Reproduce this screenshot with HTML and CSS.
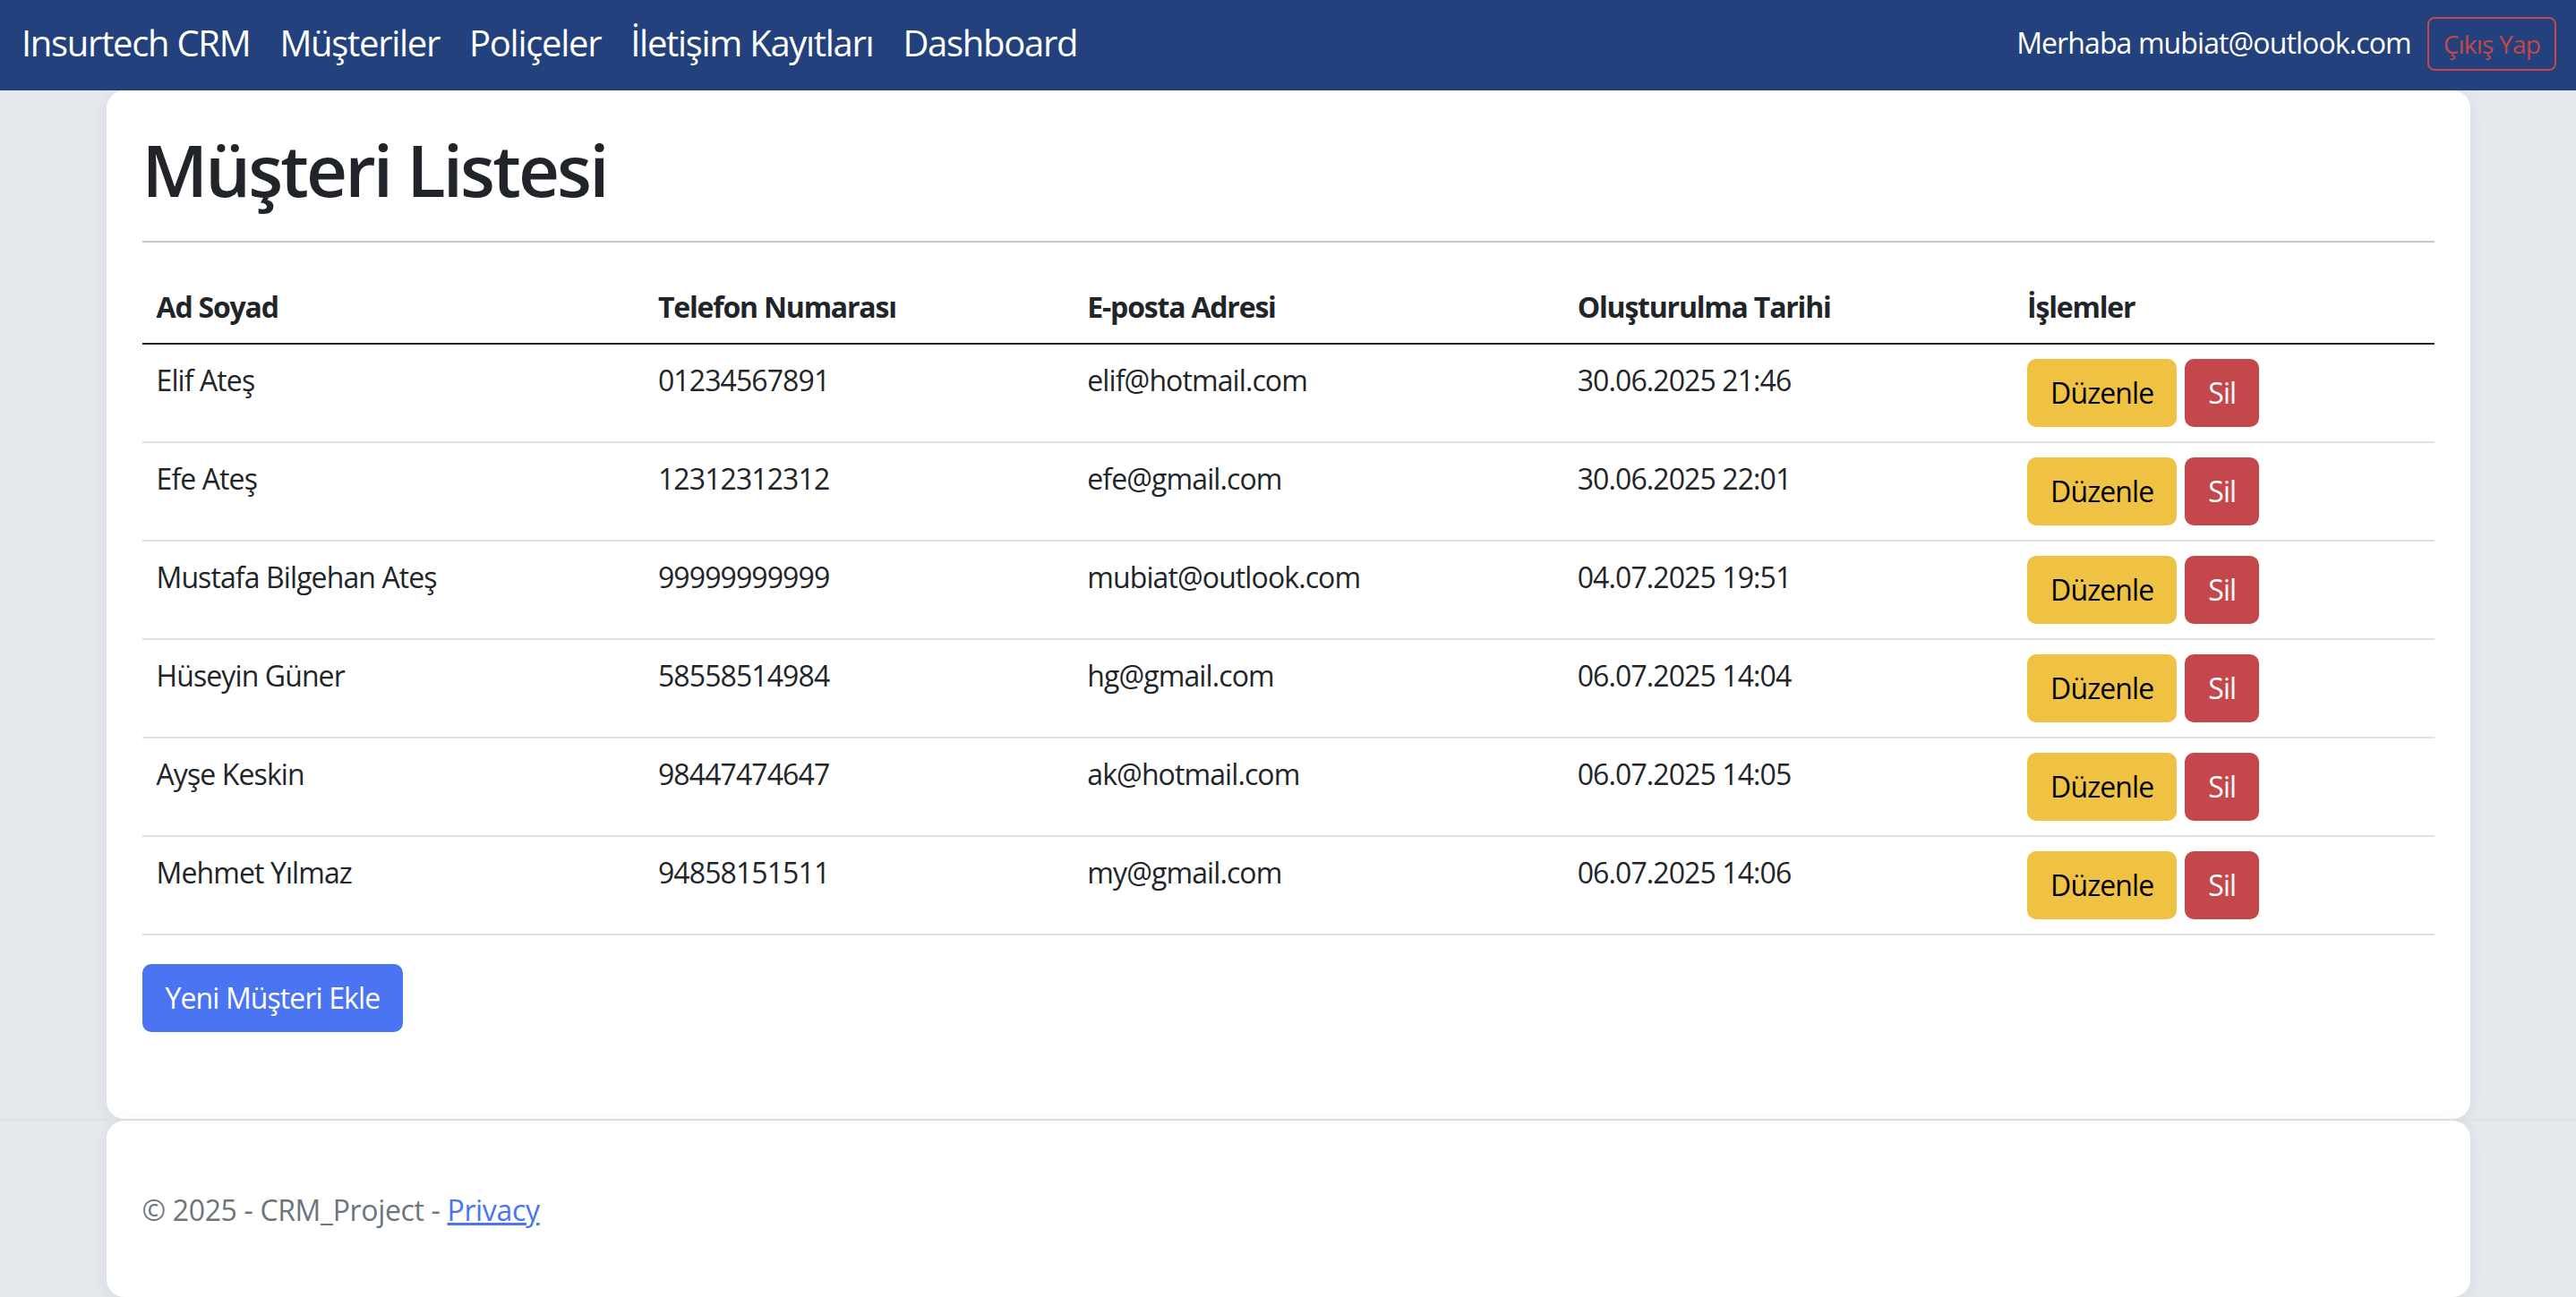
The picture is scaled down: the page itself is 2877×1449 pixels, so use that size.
FILE: index.html
```html
<!DOCTYPE html>
<html lang="tr">
<head>
<meta charset="utf-8">
<title>Müşteri Listesi - Insurtech CRM</title>
<link rel="stylesheet" href="styles.css">
</head>
<body>
<header class="navbar">
  <nav class="nav-left">
    <a class="brand" href="#">Insurtech CRM</a>
    <a class="nav-link" href="#">Müşteriler</a>
    <a class="nav-link" href="#">Poliçeler</a>
    <a class="nav-link" href="#">İletişim Kayıtları</a>
    <a class="nav-link" href="#">Dashboard</a>
  </nav>
  <div class="nav-right">
    <span class="greeting">Merhaba mubiat@outlook.com</span>
    <button class="btn-logout" type="button">Çıkış Yap</button>
  </div>
</header>

<main class="container card main-card">
  <h1 class="page-title">Müşteri Listesi</h1>
  <hr class="divider">
  <table class="table">
    <thead>
      <tr>
        <th class="col-name">Ad Soyad</th>
        <th class="col-phone">Telefon Numarası</th>
        <th class="col-mail">E-posta Adresi</th>
        <th class="col-date">Oluşturulma Tarihi</th>
        <th class="col-actions">İşlemler</th>
      </tr>
    </thead>
    <tbody>
      <tr>
        <td>Elif Ateş</td><td>01234567891</td><td>elif@hotmail.com</td><td>30.06.2025 21:46</td>
        <td><div class="actions"><a class="btn btn-warning" href="#">Düzenle</a><a class="btn btn-danger" href="#">Sil</a></div></td>
      </tr>
      <tr>
        <td>Efe Ateş</td><td>12312312312</td><td>efe@gmail.com</td><td>30.06.2025 22:01</td>
        <td><div class="actions"><a class="btn btn-warning" href="#">Düzenle</a><a class="btn btn-danger" href="#">Sil</a></div></td>
      </tr>
      <tr>
        <td>Mustafa Bilgehan Ateş</td><td>99999999999</td><td>mubiat@outlook.com</td><td>04.07.2025 19:51</td>
        <td><div class="actions"><a class="btn btn-warning" href="#">Düzenle</a><a class="btn btn-danger" href="#">Sil</a></div></td>
      </tr>
      <tr>
        <td>Hüseyin Güner</td><td>58558514984</td><td>hg@gmail.com</td><td>06.07.2025 14:04</td>
        <td><div class="actions"><a class="btn btn-warning" href="#">Düzenle</a><a class="btn btn-danger" href="#">Sil</a></div></td>
      </tr>
      <tr>
        <td>Ayşe Keskin</td><td>98447474647</td><td>ak@hotmail.com</td><td>06.07.2025 14:05</td>
        <td><div class="actions"><a class="btn btn-warning" href="#">Düzenle</a><a class="btn btn-danger" href="#">Sil</a></div></td>
      </tr>
      <tr>
        <td>Mehmet Yılmaz</td><td>94858151511</td><td>my@gmail.com</td><td>06.07.2025 14:06</td>
        <td><div class="actions"><a class="btn btn-warning" href="#">Düzenle</a><a class="btn btn-danger" href="#">Sil</a></div></td>
      </tr>
    </tbody>
  </table>
  <a class="btn btn-primary" href="#">Yeni Müşteri Ekle</a>
</main>

<footer class="footer">
  <div class="container card footer-card">
    © 2025 - CRM_Project - <a class="footer-link" href="#">Privacy</a>
  </div>
</footer>
</body>
</html>
```

FILE: styles.css
```css
html, body {
  margin: 0;
  padding: 0;
}

body {
  background: #e5e9ed;
  font-family: "Open Sans", "Noto Sans", "DejaVu Sans", sans-serif;
  font-size: 32px;
  line-height: 1.5;
  color: #212529;
  overflow: hidden;
}

/* ---------- navbar ---------- */
.navbar {
  height: 101px;
  box-sizing: border-box;
  background: #23417c;
  display: flex;
  align-items: center;
  justify-content: space-between;
  padding: 0 22px 6px 24px;
}

.nav-left {
  display: flex;
  align-items: center;
  gap: 33px;
}

.brand,
.nav-link {
  color: #ffffff;
  text-decoration: none;
  font-size: 40px;
  line-height: 60px;
  letter-spacing: -1.3px;
}

.nav-right {
  display: flex;
  align-items: center;
  gap: 18px;
}

.greeting {
  color: #ffffff;
  font-size: 32px;
  letter-spacing: -0.9px;
}

.btn-logout {
  font-family: inherit;
  font-size: 28px;
  line-height: 42px;
  letter-spacing: -0.8px;
  color: #c4474b;
  background: transparent;
  border: 2px solid #c4474b;
  border-radius: 8px;
  padding: 7px 16px;
  margin-top: 3px;
}

/* ---------- main card ---------- */
.container {
  width: 2640px;
  margin: 0 auto;
  box-sizing: border-box;
}

.card {
  background: #ffffff;
  border-radius: 20px;
  box-shadow: 0 4px 18px rgba(30, 40, 60, 0.07);
}

.main-card {
  padding: 40px 40px 97px;
}

.page-title {
  margin: 0;
  font-size: 80px;
  line-height: 96px;
  font-weight: 600;
  letter-spacing: -2.9px;
}

.divider {
  margin: 32px 0;
  border: 0;
  border-top: 2px solid #c8c8c8;
}

/* ---------- table ---------- */
.table {
  width: 100%;
  border-collapse: collapse;
  table-layout: fixed;
  margin-bottom: 32px;
  vertical-align: top;
}

.table th,
.table td {
  text-align: left;
  padding: 16px;
  line-height: 48px;
  font-size: 32px;
  letter-spacing: -0.9px;
  vertical-align: top;
}

.table th {
  font-weight: 700;
  letter-spacing: -1.2px;
  border-bottom: 2px solid #212529;
}

.table td {
  border-bottom: 2px solid #dee2e6;
}

.col-name { width: 528px; }
.col-phone { width: 447px; }
.col-mail { width: 515px; }
.col-date { width: 470px; }
.col-actions { width: 438px; }

.actions {
  display: flex;
  gap: 9px;
}

/* ---------- buttons ---------- */
.btn {
  display: inline-block;
  box-sizing: border-box;
  font-size: 32px;
  line-height: 48px;
  padding: 12px 24px;
  border: 2px solid transparent;
  border-radius: 10px;
  text-decoration: none;
  letter-spacing: -0.9px;
}

.btn-warning {
  background: #f0c244;
  border-color: #f0c244;
  color: #000000;
}

.btn-danger {
  background: #c4474b;
  border-color: #c4474b;
  color: #ffffff;
}

.btn-primary {
  background: #4a74f2;
  border-color: #4a74f2;
  color: #ffffff;
}

/* ---------- footer ---------- */
.footer {
  border-top: 2px solid #dee2e6;
}

.footer-card {
  padding: 40px 40px 37px;
  line-height: 120px;
  color: #6c757d;
  letter-spacing: -0.35px;
  border-radius: 20px;
}

.footer-link {
  color: #4a74f2;
  text-decoration: underline;
}
```
